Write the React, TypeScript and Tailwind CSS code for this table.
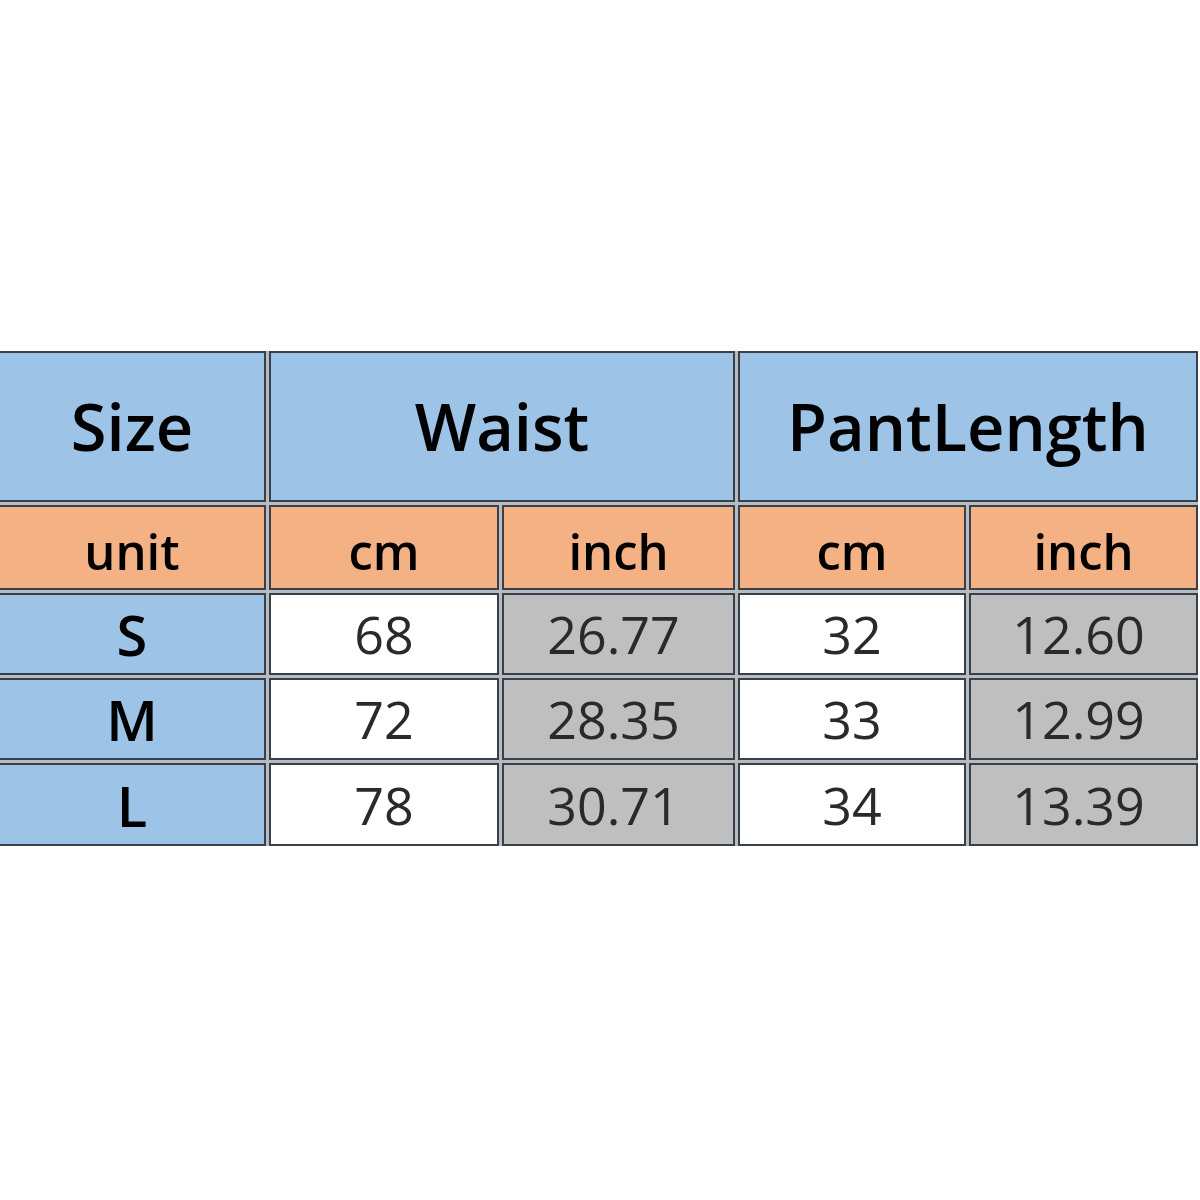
import React from "react";

const cell = "border-2 border-[#38404a] flex items-center justify-center";
const blue = "bg-[#9dc3e6]";
const orange = "bg-[#f4b183]";
const gray = "bg-[#bfbfbf]";
const white = "bg-white";

const rows = [
  ["S", "68", "26.77", "32", "12.60"],
  ["M", "72", "28.35", "33", "12.99"],
  ["L", "78", "30.71", "34", "13.39"],
];

export default function App() {
  return (
    <div className="w-[1200px] h-[1200px] bg-white overflow-hidden" style={{ fontFamily: '"Open Sans", "Noto Sans", sans-serif' }}>
      <div className="mt-[351px] ml-[-2px] w-[1200px] grid grid-cols-[268px_230px_233px_228px_1fr] grid-rows-[151px_85px_82px_82px_83px] gap-[3px] bg-[#b8bcc0]">
        <div className={`${cell} ${blue} text-[65px] font-semibold text-black`}>Size</div>
        <div className={`${cell} ${blue} col-span-2 text-[65px] font-semibold text-black`}>Waist</div>
        <div className={`${cell} ${blue} col-span-2 text-[65px] font-semibold text-black`}>PantLength</div>
        <div className={`${cell} ${orange} text-[49px] font-semibold text-black pt-[8px]`}>unit</div>
        <div className={`${cell} ${orange} text-[49px] font-semibold text-black pt-[8px]`}>cm</div>
        <div className={`${cell} ${orange} text-[49px] font-semibold text-black pt-[8px]`}>inch</div>
        <div className={`${cell} ${orange} text-[49px] font-semibold text-black pt-[8px]`}>cm</div>
        <div className={`${cell} ${orange} text-[49px] font-semibold text-black pt-[8px]`}>inch</div>
        {rows.map((r) => (
          <React.Fragment key={r[0]}>
            <div className={`${cell} ${blue} text-[56px] font-semibold text-black`}>{r[0]}</div>
            <div className={`${cell} ${white} text-[52px] text-[#2a2a2a]`}>{r[1]}</div>
            <div className={`${cell} ${gray} text-[52px] text-[#2a2a2a] pr-[10px]`}>{r[2]}</div>
            <div className={`${cell} ${white} text-[52px] text-[#2a2a2a]`}>{r[3]}</div>
            <div className={`${cell} ${gray} text-[52px] text-[#2a2a2a] pr-[10px]`}>{r[4]}</div>
          </React.Fragment>
        ))}
      </div>
    </div>
  );
}
